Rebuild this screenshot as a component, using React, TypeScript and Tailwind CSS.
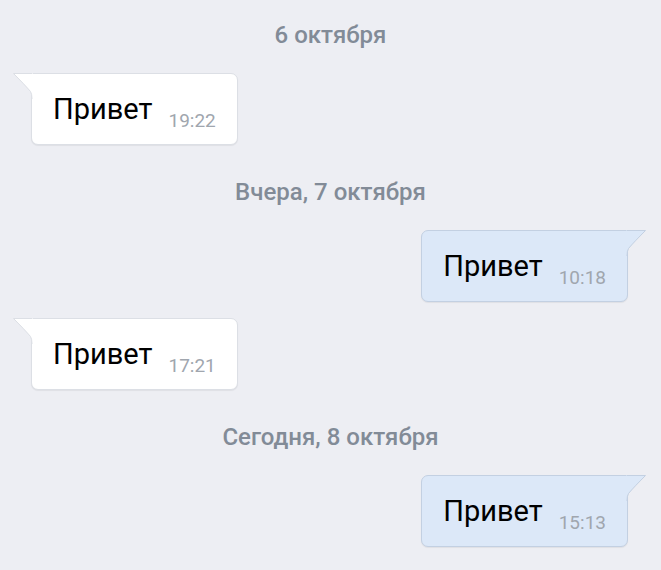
import React from "react";

type Msg =
  | { kind: "date"; text: string }
  | { kind: "in" | "out"; text: string; time: string };

const items: Msg[] = [
  { kind: "date", text: "6 октября" },
  { kind: "in", text: "Привет", time: "19:22" },
  { kind: "date", text: "Вчера, 7 октября" },
  { kind: "out", text: "Привет", time: "10:18" },
  { kind: "in", text: "Привет", time: "17:21" },
  { kind: "date", text: "Сегодня, 8 октября" },
  { kind: "out", text: "Привет", time: "15:13" },
];

function DateLabel({ text, first }: { text: string; first: boolean }) {
  return (
    <div className={"flex justify-center pb-[24px] " + (first ? "pt-[21px]" : "pt-[33px]")}>
      <span className="text-[24px] leading-[28px] font-medium text-[#828b97]">{text}</span>
    </div>
  );
}

function Bubble({ out, text, time }: { out: boolean; text: string; time: string }) {
  const fill = out ? "#dce8f8" : "#ffffff";
  const stroke = out ? "#c3d0e2" : "#dcdfe5";
  return (
    <div className={out ? "flex justify-end pr-[33px]" : "flex justify-start pl-[31px]"}>
      <div
        className={
          "relative flex items-end pt-[19px] pb-[19px] pl-[21px] pr-[21px] rounded-[7px] border shadow-[0_1px_1px_rgba(0,0,0,0.06)] " +
          (out
            ? "bg-[#dce8f8] border-[#c3d0e2] rounded-tr-none"
            : "bg-white border-[#dcdfe5] rounded-tl-none")
        }
      >
        {out ? (
          <svg className="absolute -top-px -right-[20px]" width="21" height="26" viewBox="0 0 21 26">
            <path d="M0 0.5 L19.5 0.5 Q8 12 2.5 18.5 Q1 21 1 26 L0 26 Z" fill={fill} />
            <path d="M1 0.5 L19.5 0.5 Q8 12 2.5 18.5 Q1 21 1 26" fill="none" stroke={stroke} strokeWidth="1" />
          </svg>
        ) : (
          <svg className="absolute -top-px -left-[20px]" width="21" height="26" viewBox="0 0 21 26">
            <path d="M21 0.5 L1.5 0.5 Q13 12 18.5 18.5 Q20 21 20 26 L21 26 Z" fill={fill} />
            <path d="M20 0.5 L1.5 0.5 Q13 12 18.5 18.5 Q20 21 20 26" fill="none" stroke={stroke} strokeWidth="1" />
          </svg>
        )}
        <span className="text-[29px] leading-[32px] text-black">{text}</span>
        <span className="ml-[16px] -mb-[7px] text-[19px] leading-[22px] text-[#a0a6ae]">{time}</span>
      </div>
    </div>
  );
}

export default function App() {
  return (
    <div
      className="w-[661px] h-[570px] overflow-hidden bg-[#edeef3] flex flex-col"
      style={{ fontFamily: "Roboto, 'Noto Sans', sans-serif" }}
    >
      {items.map((m, i) => {
        if (m.kind === "date") return <DateLabel key={i} text={m.text} first={i === 0} />;
        const next = items[i + 1];
        return (
          <div key={i} className={next && next.kind !== "date" ? "mb-[16px]" : ""}>
            <Bubble out={m.kind === "out"} text={m.text} time={m.time} />
          </div>
        );
      })}
    </div>
  );
}
